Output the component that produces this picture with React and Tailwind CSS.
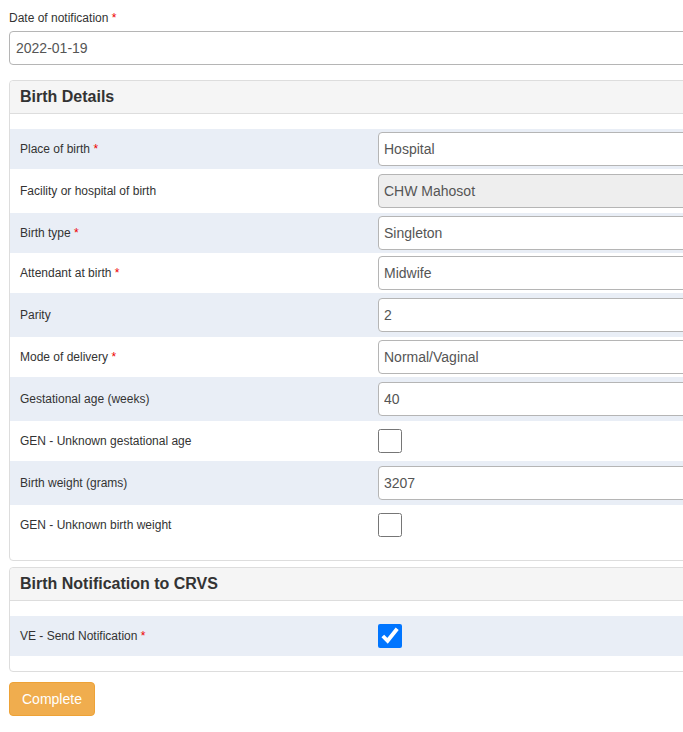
import { useState } from "react";

const birthRows = [
    { label: "Place of birth", required: true, type: "text", value: "Hospital", h: "h-[40px]" },
    { label: "Facility or hospital of birth", type: "text", value: "CHW Mahosot", disabled: true, h: "h-[44px]" },
    { label: "Birth type", required: true, type: "text", value: "Singleton", h: "h-[40px]" },
    { label: "Attendant at birth", required: true, type: "text", value: "Midwife", h: "h-[40px]" },
    { label: "Parity", type: "text", value: "2", h: "h-[44px]" },
    { label: "Mode of delivery", required: true, type: "text", value: "Normal/Vaginal", h: "h-[40px]" },
    { label: "Gestational age (weeks)", type: "text", value: "40", h: "h-[44px]" },
    { label: "GEN - Unknown gestational age", type: "checkbox", h: "h-[40px]" },
    { label: "Birth weight (grams)", type: "text", value: "3207", h: "h-[44px]" },
    { label: "GEN - Unknown birth weight", type: "checkbox", h: "h-[40px]" },
];

function Row({ row, striped }) {
    return (
        <div className={`${row.h} flex flex-row items-center ${striped ? "bg-[#e9eef6]" : "bg-white"}`}>
            <div className="w-[368px] shrink-0 pl-[10px] text-[12px] text-[#333]">
                {row.label}
                {row.required ? <span className="text-[#e00]"> *</span> : null}
            </div>
            {row.type === "checkbox" ? (
                <input type="checkbox" defaultChecked={row.checked} className="w-6 h-6 m-0" />
            ) : (
                <input
                    type="text"
                    defaultValue={row.value}
                    disabled={row.disabled}
                    className={`w-[380px] h-[34px] shrink-0 px-[5px] rounded-[4px] border border-[#b5b5b5] text-[14px] text-[#555] outline-none ${row.disabled ? "bg-[#eee]" : "bg-white"}`}
                />
            )}
        </div>
    );
}

function Panel({ title, rows }) {
    return (
        <div className="rounded-[4px] border border-[#ddd] bg-white">
            <div className="h-[33px] flex items-center px-[10px] bg-[#f5f5f5] border-b border-[#ddd] rounded-t-[4px]">
                <h3 className="text-[16px] font-bold text-[#333]">{title}</h3>
            </div>
            <div className="py-[15px]">
                {rows.map((row, i) => (
                    <Row key={row.label} row={row} striped={i % 2 === 0} />
                ))}
            </div>
        </div>
    );
}

export default function App() {
    const [date, setDate] = useState("2022-01-19");

    return (
        <div className="w-full overflow-hidden bg-white font-['Liberation_Sans',Arial,sans-serif]">
            <div className="w-[780px] pl-[9px] pt-[10px] pb-4">
                <label className="block text-[12px] leading-[17px] text-[#333] mb-1">
                    Date of notification<span className="text-[#e00]"> *</span>
                </label>
                <input
                    type="text"
                    value={date}
                    onChange={(e) => setDate(e.target.value)}
                    className="w-full h-[34px] px-[6px] rounded-[4px] border border-[#b5b5b5] text-[14px] text-[#555] outline-none"
                />
                <div className="mt-[15px]">
                    <Panel title="Birth Details" rows={birthRows} />
                </div>
                <div className="mt-[6px]">
                    <Panel
                        title="Birth Notification to CRVS"
                        rows={[{ label: "VE - Send Notification", required: true, type: "checkbox", checked: true, h: "h-[40px]" }]}
                    />
                </div>
                <button className="mt-[10px] h-[34px] px-3 rounded-[4px] bg-[#f0ad4e] border border-[#eea236] text-white text-[14px]">
                    Complete
                </button>
            </div>
        </div>
    );
}
